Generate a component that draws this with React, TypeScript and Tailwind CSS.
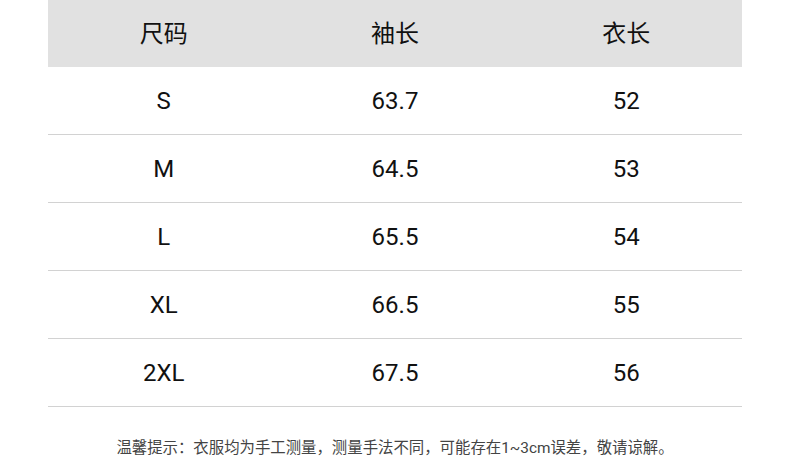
const ROWS = [
  ["S", "63.7", "52"],
  ["M", "64.5", "53"],
  ["L", "65.5", "54"],
  ["XL", "66.5", "55"],
  ["2XL", "67.5", "56"],
];

export default function App() {
  return (
    <div className="w-[790px] h-[458px] bg-white overflow-hidden font-['Roboto','Noto_Sans_CJK_SC',sans-serif] text-[#111]">
      <div className="ml-[48px] w-[694px]">
        <div className="grid grid-cols-3 h-[67px] bg-[#e1e1e1] items-center text-center text-[24px]">
          <span>尺码</span>
          <span>袖长</span>
          <span>衣长</span>
        </div>
        {ROWS.map((r) => (
          <div
            key={r[0]}
            className="grid grid-cols-3 h-[68px] items-center text-center text-[24px] border-b border-[#d2d2d2]"
          >
            {r.map((c, i) => (
              <span key={i}>{c}</span>
            ))}
          </div>
        ))}
      </div>
      <p className="mt-[34px] text-center text-[15.4px] leading-none text-[#444]">
        温馨提示：衣服均为手工测量，测量手法不同，可能存在1~3cm误差，敬请谅解。
      </p>
    </div>
  );
}
